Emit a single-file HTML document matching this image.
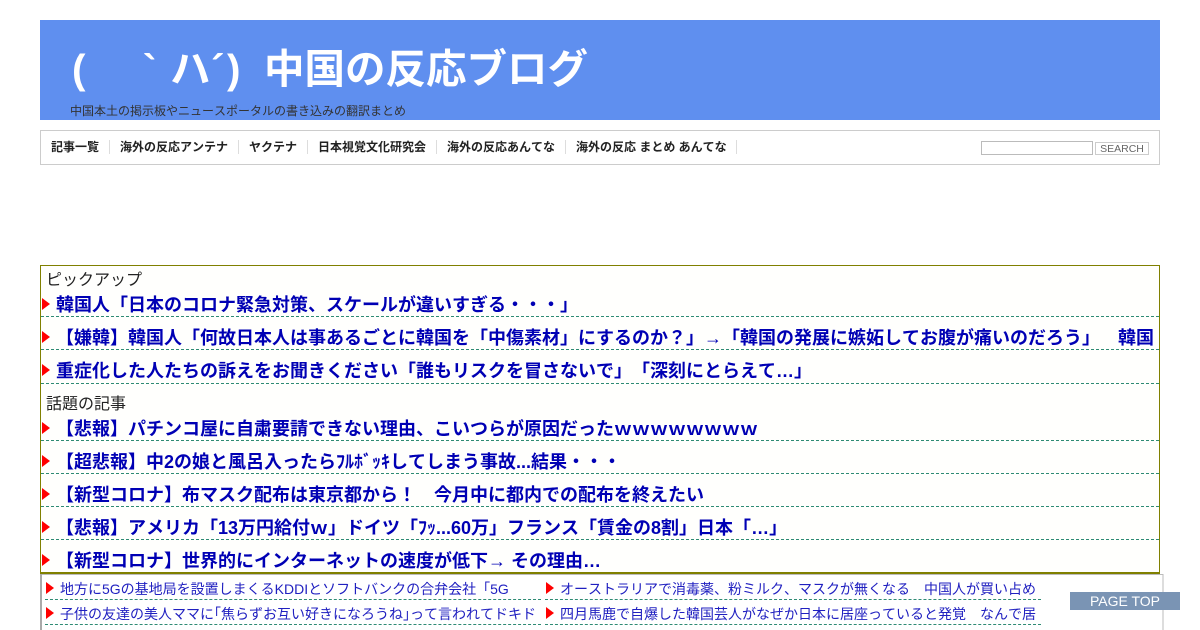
<!DOCTYPE html>
<html lang="ja"><head><meta charset="utf-8"><title>中国の反応ブログ</title>
<style>
html,body{margin:0;padding:0;background:#fff;width:1200px;height:630px;overflow:hidden}
body{font-family:"Liberation Sans","Noto Sans CJK JP","IPAGothic",sans-serif;position:relative;font-kerning:none;font-feature-settings:"chws" 0,"palt" 0,"kern" 0;text-spacing-trim:space-all}
.a{position:absolute;white-space:nowrap}
#hd{left:40px;top:20px;width:1120px;height:100px;background:#5f8fef}
.tt{position:absolute;top:44px;font-size:40.5px;line-height:50px;font-weight:bold;color:#fff;white-space:nowrap}
#sub{left:70px;top:103px;font-size:12px;line-height:16px;color:#333}
#nav{left:40px;top:130px;width:1118px;height:33px;border:1px solid #ccc}
.n{position:absolute;top:139px;height:15px;font-size:12px;line-height:16px;font-weight:bold;color:#222;white-space:nowrap}
.s{position:absolute;top:140px;width:1px;height:14px;background:#ddd}
#inp{left:981px;top:141px;width:110px;height:12px;border:1px solid #bbb}
#btn{left:1095px;top:142px;width:52px;height:11px;border:1px solid #ccc;font-size:10.5px;line-height:12px;color:#666;text-align:center}
#box{left:40px;top:265px;width:1118px;height:306px;border:1px solid #808000;border-bottom:2px solid #808000;background:#fffffd;overflow:hidden}
.lab{position:absolute;left:46px;font-size:16px;line-height:18px;color:#222;white-space:nowrap}
.l{position:absolute;left:41px;width:1118px;height:33px;border-bottom:1px dashed #2e8b74;overflow:hidden;white-space:nowrap;font-size:18px;line-height:22px;font-weight:bold;color:#0000b4}
.l span{position:absolute;left:15px;bottom:0;white-space:nowrap}
.t{position:absolute;left:1px;bottom:6px;width:0;height:0;border-left:8px solid #f00;border-top:6px solid transparent;border-bottom:6px solid transparent}
#bl{left:40px;top:574px;width:2px;height:56px;background:#aaa}
#br{left:1162px;top:574px;width:2px;height:56px;background:#ddd}
#bt{left:42px;top:574px;width:1121px;height:1px;background:#bbb}
.m{position:absolute;width:496px;height:24px;border-bottom:1px dashed #2e8b74;font-size:14px;line-height:20px;color:#2020c0;white-space:nowrap;overflow:hidden}
.m span{position:absolute;left:15px;top:4px}
.m i{position:absolute;left:1px;top:7px;width:0;height:0;border-left:8px solid #f00;border-top:6px solid transparent;border-bottom:6px solid transparent}
#pt{left:1070px;top:592px;width:110px;height:18px;background:#7a94b4;color:#fff;font-size:14px;line-height:18px;text-align:center;font-kerning:normal;font-feature-settings:"kern" 1}
</style></head><body>
<div class="a" id="hd"></div>
<div class="tt" style="left:72px">(</div>
<div class="tt" style="left:143px">`</div>
<div class="tt" style="left:170px">ハ</div>
<div class="tt" style="left:211px">´</div>
<div class="tt" style="left:227px">)</div>
<div class="tt" style="left:264px">中国の反応ブログ</div>
<div class="a" id="sub">中国本土の掲示板やニュースポータルの書き込みの翻訳まとめ</div>
<div class="a" id="nav"></div>
<div class="n" style="left:51px">記事一覧</div><div class="s" style="left:109px"></div>
<div class="n" style="left:120px">海外の反応アンテナ</div><div class="s" style="left:238px"></div>
<div class="n" style="left:249px">ヤクテナ</div><div class="s" style="left:307px"></div>
<div class="n" style="left:318px">日本視覚文化研究会</div><div class="s" style="left:436px"></div>
<div class="n" style="left:447px">海外の反応あんてな</div><div class="s" style="left:565px"></div>
<div class="n" style="left:576px">海外の反応 まとめ あんてな</div><div class="s" style="left:736px"></div>
<div class="a" id="inp"></div>
<div class="a" id="btn">SEARCH</div>
<div class="a" id="box"></div>
<div class="lab" style="top:272px">ピックアップ</div>
<div class="l" style="top:283px"><i class="t"></i><span>韓国人「日本のコロナ緊急対策、スケールが違いすぎる・・・」</span></div>
<div class="l" style="top:316px"><i class="t"></i><span>【嫌韓】韓国人「何故日本人は事あるごとに韓国を「中傷素材」にするのか？」→「韓国の発展に嫉妬してお腹が痛いのだろう」　韓国</span></div>
<div class="l" style="top:350px"><i class="t" style="bottom:7px"></i><span style="bottom:1px">重症化した人たちの訴えをお聞きください「誰もリスクを冒さないで」「深刻にとらえて<b style="font-family:'Liberation Sans'">…</b>」</span></div>
<div class="lab" style="top:396px">話題の記事</div>
<div class="l" style="top:407px"><i class="t"></i><span>【悲報】パチンコ屋に自粛要請できない理由、こいつらが原因だったｗｗｗｗｗｗｗｗ</span></div>
<div class="l" style="top:440px"><i class="t"></i><span>【超悲報】中2の娘と風呂入ったらﾌﾙﾎﾞｯｷしてしまう事故...結果・・・</span></div>
<div class="l" style="top:473px"><i class="t"></i><span>【新型コロナ】布マスク配布は東京都から！　今月中に都内での配布を終えたい</span></div>
<div class="l" style="top:506px"><i class="t"></i><span>【悲報】アメリカ「13万円給付ｗ」ドイツ「ﾌｯ...60万」フランス「賃金の8割」日本「<b style="font-family:'Liberation Sans'">…</b>」</span></div>
<div class="l" style="top:539px;border-bottom:0"><i class="t"></i><span>【新型コロナ】世界的にインターネットの速度が低下→ その理由<b style="font-family:'Liberation Sans'">…</b></span></div>
<div class="a" id="bl"></div><div class="a" id="br"></div><div class="a" id="bt"></div>
<div class="m" style="left:45px;top:575px"><i></i><span>地方に5Gの基地局を設置しまくるKDDIとソフトバンクの合弁会社「5G</span></div>
<div class="m" style="left:545px;top:575px"><i></i><span>オーストラリアで消毒薬、粉ミルク、マスクが無くなる　中国人が買い占め</span></div>
<div class="m" style="left:45px;top:600px"><i></i><span>子供の友達の美人ママに｢焦らずお互い好きになろうね｣って言われてドキド</span></div>
<div class="m" style="left:545px;top:600px"><i></i><span>四月馬鹿で自爆した韓国芸人がなぜか日本に居座っていると発覚　なんで居</span></div>
<div class="a" id="pt">PAGE TOP</div>
</body></html>
